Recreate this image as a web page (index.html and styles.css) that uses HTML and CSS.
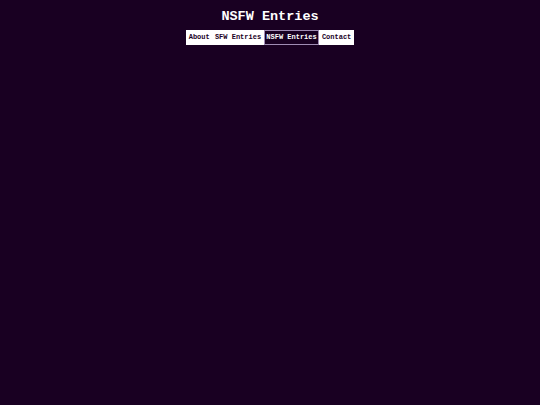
FILE: index.html
```html
<!DOCTYPE html>
<html>
<head>
<meta charset="utf-8">
<link rel="stylesheet" href="styles.css">
<title>NSFW Entries</title>
</head>
<body>
<header class="header">
  <h1 class="title">NSFW Entries</h1>
  <nav class="nav">
    <a class="nav-link" href="#">About</a>
    <a class="nav-link" href="#">SFW Entries</a>
    <a class="nav-link active" href="#">NSFW Entries</a>
    <a class="nav-link" href="#">Contact</a>
  </nav>
</header>
</body>
</html>
```
FILE: styles.css
```css
html, body {
  margin: 0;
  padding: 0;
  height: 100%;
}
body {
  background: #190022;
  font-family: "Liberation Mono", "Courier New", monospace;
  color: #ffffff;
}
.header {
  display: flex;
  flex-direction: column;
  align-items: center;
  padding-top: 9px;
}
.title {
  margin: 0;
  font-size: 13.5px;
  line-height: 16px;
  font-weight: bold;
  color: #ffffff;
}
.nav {
  display: flex;
  margin-top: 5px;
  background: #ffffff;
}
.nav-link {
  display: block;
  font-size: 7px;
  line-height: 13px;
  font-weight: bold;
  padding: 1px 2.6px;
  color: #1a0026;
  text-decoration: none;
  background: #ffffff;
}
.nav-link.active {
  background: #190022;
  color: #ffffff;
  border: 1px solid #a08cb4;
  padding: 0 1.6px;
}
```
